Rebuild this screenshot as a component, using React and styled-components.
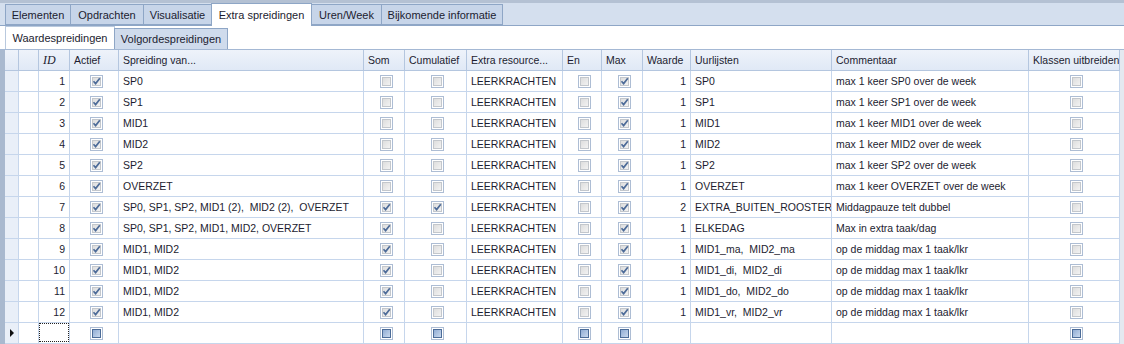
import React from 'react'
import styled, { createGlobalStyle } from 'styled-components'

const GlobalStyle = createGlobalStyle`
  html, body { margin: 0; padding: 0; background: #fff; }
  body { font-family: "Liberation Sans", Arial, sans-serif; font-size: 10.5px; color: #1c1c30; }
`

const COLS = '14px 20px 31px 49px 245px 41px 62px 96px 39px 41px 48px 141px 197px 91px'

const Window = styled.div`
  width: 1124px;
  height: 344px;
  overflow: hidden;
  background: #fff;
  display: flex;
  flex-direction: column;
`

const TopBand = styled.div`
  height: 4px;
  background: #b4c1d3;
`

const TabStrip = styled.div`
  height: 22px;
  background: #d4dfee;
  border-bottom: 1px solid #8ea6c6;
  display: flex;
  align-items: flex-end;
  padding-left: 5px;
`

const Tab = styled.div`
  box-sizing: border-box;
  width: ${p => p.w}px;
  height: ${p => (p.active ? 23 : 21)}px;
  margin-bottom: ${p => (p.active ? -1 : 0)}px;
  margin-left: ${p => (p.first ? 0 : -1)}px;
  border: 1px solid #8ea6c6;
  border-bottom: ${p => (p.active ? 'none' : '1px solid #8ea6c6')};
  background: ${p => (p.active ? '#fff' : '#c7d5e9')};
  display: flex;
  align-items: center;
  justify-content: center;
  font-size: 11px;
  color: #1c1c30;
  white-space: nowrap;
  position: relative;
  z-index: ${p => (p.active ? 1 : 0)};
`

const SubStrip = styled.div`
  height: 23px;
  background: #fff;
  display: flex;
  align-items: flex-end;
  padding-left: 5px;
`

const SubTab = styled.div`
  box-sizing: border-box;
  width: ${p => p.w}px;
  height: ${p => (p.active ? 23 : 21)}px;
  margin-left: ${p => (p.first ? 0 : -1)}px;
  border: 1px solid ${p => (p.active ? '#b9c9de' : '#8ea6c6')};
  border-bottom: none;
  background: ${p => (p.active ? '#fff' : '#cfdbec')};
  display: flex;
  align-items: center;
  justify-content: center;
  font-size: 11px;
  white-space: nowrap;
`

const GridFrame = styled.div`
  flex: 1;
  display: flex;
  border-top: 1px solid #a4b8d4;
  background: #dde5f0;
`

const LeftEdge = styled.div`
  width: 5px;
  background: #a9b9cf;
`

const Grid = styled.div`
  display: flex;
  flex-direction: column;
`

const HeaderRow = styled.div`
  display: grid;
  grid-template-columns: ${COLS};
  height: 20px;
  background: linear-gradient(#eef3fa, #e0e9f6);
  border-bottom: 1px solid #b4c6df;
`

const HeaderCell = styled.div`
  box-sizing: border-box;
  border-right: 1px solid #b4c6df;
  padding-left: 4px;
  display: flex;
  align-items: center;
  font-style: ${p => (p.italic ? 'italic' : 'normal')};
  font-family: ${p => (p.italic ? '"Liberation Serif", serif' : 'inherit')};
  font-size: ${p => (p.italic ? 12 : 10.5)}px;
  white-space: nowrap;
  overflow: hidden;
`

const Row = styled.div`
  display: grid;
  grid-template-columns: ${COLS};
  height: 21px;
  background: #fff;
`

const Cell = styled.div`
  box-sizing: border-box;
  border-right: 1px solid #c6d6ec;
  border-bottom: 1px solid #c6d6ec;
  padding: 0 ${p => (p.right ? 4 : 0)}px 0 ${p => (p.right ? 0 : 4)}px;
  display: flex;
  align-items: center;
  justify-content: ${p => (p.center ? 'center' : p.right ? 'flex-end' : 'flex-start')};
  white-space: pre;
  overflow: hidden;
  background: ${p => (p.head ? '#e9eff8' : '#fff')};
  position: relative;
`

const Focus = styled.div`
  position: absolute;
  inset: 0 0 1px 0;
  border: 1px dotted #222;
`

const Arrow = styled.div`
  width: 0;
  height: 0;
  border-top: 4px solid transparent;
  border-bottom: 4px solid transparent;
  border-left: 4px solid #111;
  margin-left: 1px;
`

const RightEdge = styled.div`
  flex: 1;
  background: #e4e9f0;
`

const Box = ({ checked, fresh }) => (
  <svg width="13" height="13" viewBox="0 0 13 13">
    <defs>
      <linearGradient id="gOff" x1="0" y1="0" x2="1" y2="1">
        <stop offset="0" stopColor="#dcdcdc" />
        <stop offset="1" stopColor="#f4f4f4" />
      </linearGradient>
      <linearGradient id="gNew" x1="0" y1="0" x2="1" y2="1">
        <stop offset="0" stopColor="#8eaad2" />
        <stop offset="1" stopColor="#cddcf0" />
      </linearGradient>
    </defs>
    <rect x="0.5" y="0.5" width="12" height="12" fill="#fff" stroke="#adbdd4" />
    <rect x="2.5" y="2.5" width="8" height="8" fill={fresh ? 'url(#gNew)' : 'url(#gOff)'} stroke={fresh ? '#4c6c98' : '#c3c7cc'} />
    {checked && <path d="M3.5 6.3 L5.6 8.6 L9.8 3.2" fill="none" stroke="#4d6b98" strokeWidth="1.7" />}
  </svg>
)

const rows = [
  [1, 'SP0', false, false, 1, 'SP0', 'max 1 keer SP0 over de week'],
  [2, 'SP1', false, false, 1, 'SP1', 'max 1 keer SP1 over de week'],
  [3, 'MID1', false, false, 1, 'MID1', 'max 1 keer MID1 over de week'],
  [4, 'MID2', false, false, 1, 'MID2', 'max 1 keer MID2 over de week'],
  [5, 'SP2', false, false, 1, 'SP2', 'max 1 keer SP2 over de week'],
  [6, 'OVERZET', false, false, 1, 'OVERZET', 'max 1 keer OVERZET over de week'],
  [7, 'SP0, SP1, SP2, MID1 (2),  MID2 (2),  OVERZET', true, true, 2, 'EXTRA_BUITEN_ROOSTER', 'Middagpauze telt dubbel'],
  [8, 'SP0, SP1, SP2, MID1, MID2, OVERZET', true, false, 1, 'ELKEDAG', 'Max in extra taak/dag'],
  [9, 'MID1, MID2', true, false, 1, 'MID1_ma,  MID2_ma', 'op de middag max 1 taak/lkr'],
  [10, 'MID1, MID2', true, false, 1, 'MID1_di,  MID2_di', 'op de middag max 1 taak/lkr'],
  [11, 'MID1, MID2', true, false, 1, 'MID1_do,  MID2_do', 'op de middag max 1 taak/lkr'],
  [12, 'MID1, MID2', true, false, 1, 'MID1_vr,  MID2_vr', 'op de middag max 1 taak/lkr'],
]

const tabs = [
  ['Elementen', 66], ['Opdrachten', 74], ['Visualisatie', 69],
  ['Extra spreidingen', 101], ['Uren/Week', 71], ['Bijkomende informatie', 122],
]

export default function App() {
  return (
    <>
      <GlobalStyle />
      <Window>
        <TopBand />
        <TabStrip>
          {tabs.map(([t, w], i) => (
            <Tab key={t} w={w} first={i === 0} active={t === 'Extra spreidingen'}>{t}</Tab>
          ))}
        </TabStrip>
        <SubStrip>
          <SubTab first active w={110}>Waardespreidingen</SubTab>
          <SubTab w={114}>Volgordespreidingen</SubTab>
        </SubStrip>
        <GridFrame>
          <LeftEdge />
          <Grid>
            <HeaderRow>
              <HeaderCell />
              <HeaderCell />
              <HeaderCell italic>ID</HeaderCell>
              <HeaderCell>Actief</HeaderCell>
              <HeaderCell>Spreiding van...</HeaderCell>
              <HeaderCell>Som</HeaderCell>
              <HeaderCell>Cumulatief</HeaderCell>
              <HeaderCell>Extra resource...</HeaderCell>
              <HeaderCell>En</HeaderCell>
              <HeaderCell>Max</HeaderCell>
              <HeaderCell>Waarde</HeaderCell>
              <HeaderCell>Uurlijsten</HeaderCell>
              <HeaderCell>Commentaar</HeaderCell>
              <HeaderCell>Klassen uitbreiden</HeaderCell>
            </HeaderRow>
            {rows.map(([id, spr, som, cum, val, uur, com]) => (
              <Row key={id}>
                <Cell head />
                <Cell />
                <Cell right>{id}</Cell>
                <Cell center><Box checked /></Cell>
                <Cell>{spr}</Cell>
                <Cell center><Box checked={som} /></Cell>
                <Cell center><Box checked={cum} /></Cell>
                <Cell>LEERKRACHTEN</Cell>
                <Cell center><Box /></Cell>
                <Cell center><Box checked /></Cell>
                <Cell right>{val}</Cell>
                <Cell>{uur}</Cell>
                <Cell>{com}</Cell>
                <Cell center><Box /></Cell>
              </Row>
            ))}
            <Row>
              <Cell head><Arrow /></Cell>
              <Cell />
              <Cell><Focus /></Cell>
              <Cell center><Box fresh /></Cell>
              <Cell />
              <Cell center><Box fresh /></Cell>
              <Cell center><Box fresh /></Cell>
              <Cell />
              <Cell center><Box fresh /></Cell>
              <Cell center><Box fresh /></Cell>
              <Cell />
              <Cell />
              <Cell />
              <Cell center><Box fresh /></Cell>
            </Row>
          </Grid>
          <RightEdge />
        </GridFrame>
      </Window>
    </>
  )
}
